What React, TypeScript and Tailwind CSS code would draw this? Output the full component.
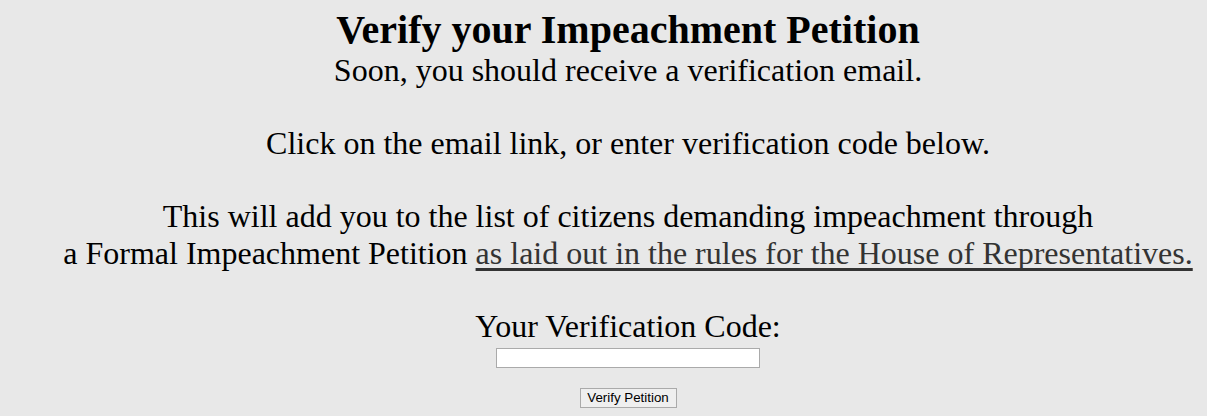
export default function App() {
  return (
    <div className="min-h-[416px] bg-[#e8e8e8] pl-[49px] text-center text-black" style={{ fontFamily: '"Liberation Serif", "Times New Roman", serif' }}>
      <h1 className="m-0 pt-[8px] text-[40px] font-bold leading-[44px]">Verify your Impeachment Petition</h1>
      <div className="text-[32px] leading-[36.6px]">
        <p>Soon, you should receive a verification email.</p>
        <p>&nbsp;</p>
        <p>Click on the email link, or enter verification code below.</p>
        <p>&nbsp;</p>
        <p>This will add you to the list of citizens demanding impeachment through</p>
        <p>
          a Formal Impeachment Petition{' '}
          <a href="#" className="text-[#333] underline decoration-[3px] underline-offset-[4px] [text-decoration-skip-ink:none]">as laid out in the rules for the House of Representatives.</a>
        </p>
        <p>&nbsp;</p>
        <p>Your Verification Code:</p>
      </div>
      <div className="flex flex-col items-center">
        <input type="text" className="mt-[3px] h-[20px] w-[264px] border border-[#aaa] bg-white" />
        <button className="mt-[20px] h-[20px] w-[97px] border border-[#aaa] bg-[#efefef] text-[13.333px] leading-none text-black" style={{ fontFamily: 'Arial, "Liberation Sans", sans-serif' }}>Verify Petition</button>
      </div>
    </div>
  );
}
